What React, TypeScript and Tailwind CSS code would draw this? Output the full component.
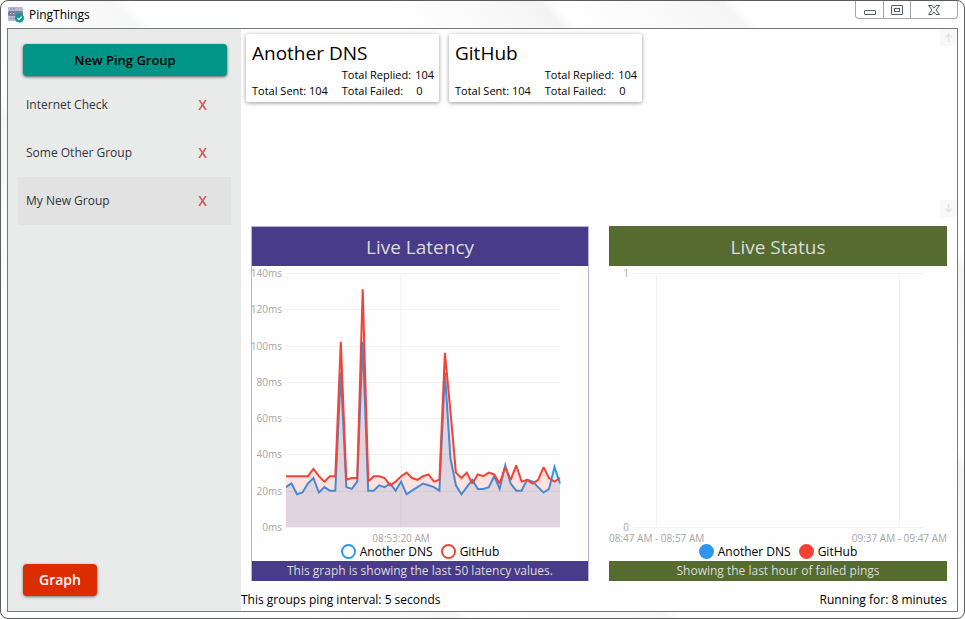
import React from "react";

const FONT = "font-['Open_Sans','Noto_Sans',sans-serif]";

const DNS = [
  22, 24, 18, 19, 24, 27, 19, 22, 20, 20, 85, 22, 21, 25, 102, 20, 20, 23, 22, 24, 20, 25, 18, 20, 22, 24,
  23, 22, 20, 85, 38, 23, 18, 22, 26, 21, 21, 22, 28, 21, 34, 24, 20, 20, 26, 25, 22, 19, 21, 33, 24,
];
const GITHUB = [
  28, 28, 28, 28, 28, 32, 28, 25, 28, 28, 102, 26, 27, 27, 131, 25, 28, 28, 27, 23, 25, 28, 30, 27, 26, 28,
  29, 25, 26, 96, 64, 30, 27, 30, 24, 29, 28, 30, 29, 24, 33, 26, 34, 25, 26, 24, 26, 33, 27, 25, 27,
];

const LEFT = 34;
const RIGHT = 308;
const TOP = 7;
const BOTTOM = 261;

function toPoints(values: number[]) {
  return values
    .map((v, i) => {
      const x = LEFT + (i * (RIGHT - LEFT)) / (values.length - 1);
      const y = BOTTOM - (v * (BOTTOM - TOP)) / 140;
      return `${x.toFixed(1)},${y.toFixed(1)}`;
    })
    .join(" ");
}

function AppIcon() {
  return (
    <svg className="size-4" viewBox="0 0 16 16" aria-hidden="true">
      <rect x="0" y="0" width="15" height="4" rx="1" fill="#b4bccd" />
      <rect x="0" y="4" width="15" height="5" rx="1" fill="#7a7fa6" />
      <rect x="0" y="9" width="12" height="5" rx="1" fill="#b4bccd" />
      <path d="M2 2h2M5 2h2M2 11.500h2M5 11.500h2" stroke="#8489ab" strokeWidth="1" />
      <path d="M2 6.500h1M5 6.500h1" stroke="#fff" strokeWidth="1" />
      <circle cx="11.500" cy="11" r="4.500" fill="#0b9a90" />
      <path d="M9.300 11l1.600 1.600 2.800-3" fill="none" stroke="#fff" strokeWidth="1.300" />
    </svg>
  );
}

function TitleBar() {
  return (
    <header className="flex h-[27px] items-start justify-between pl-[7px]">
      <div className="flex h-[27px] items-center gap-[5px]">
        <AppIcon />
        <h1 className="text-xs text-black">PingThings</h1>
      </div>
      <div className="mr-[6px] flex h-[18px] rounded-b border border-t-0 border-[#a3a6a8] bg-white">
        <button aria-label="Minimize" className="flex w-7 items-center justify-center border-r border-[#a3a6a8]">
          <svg className="h-4 w-4" viewBox="0 0 16 16">
            <rect x="2.500" y="8.500" width="11" height="4" rx="0.500" fill="#f4f4f4" stroke="#555f66" />
          </svg>
        </button>
        <button aria-label="Maximize" className="flex w-[27px] items-center justify-center border-r border-[#a3a6a8]">
          <svg className="h-4 w-4" viewBox="0 0 16 16">
            <rect x="2.500" y="3.500" width="11" height="9" rx="0.500" fill="#f4f4f4" stroke="#555f66" />
            <rect x="5.500" y="6.500" width="5" height="3" fill="#fff" stroke="#555f66" />
          </svg>
        </button>
        <button aria-label="Close" className="flex w-[46px] items-center justify-center">
          <svg className="h-4 w-4" viewBox="0 0 16 16">
            <path
              d="M2.500 3.500h3.500l2 2.500 2-2.500h3.500l-3.500 4.500 3.500 4.500H10L8 10l-2 2.500H2.500L6 8z"
              fill="#f4f4f4"
              stroke="#555f66"
            />
          </svg>
        </button>
      </div>
    </header>
  );
}

function Sidebar() {
  const groups = ["Internet Check", "Some Other Group", "My New Group"];
  return (
    <aside className="flex w-[233px] shrink-0 flex-col bg-[#e9ebea] px-[10px] py-[15px]">
      <button className="mr-1 ml-[5px] h-8 rounded-sm bg-[#009587] pt-px text-[13px] font-semibold text-black shadow-[0_1px_3px_#555]">
        New Ping Group
      </button>
      <ul className="mt-[5px]">
        {groups.map((name) => (
          <li
            key={name}
            className={`flex h-12 items-center justify-between pr-6 pl-2 text-xs text-[#2f3640] ${
              name === "My New Group" ? "bg-[#e2e2e2]" : ""
            }`}
          >
            <span>{name}</span>
            <button aria-label={`Remove ${name}`} className="text-sm font-semibold text-[#d65558]">
              X
            </button>
          </li>
        ))}
      </ul>
      <button className="mt-auto ml-[5px] h-8 w-[74px] rounded-sm bg-[#dd2c00] text-sm font-semibold text-white shadow-[0_1px_3px_#777]">
        Graph
      </button>
    </aside>
  );
}

function HostCard({ name }: { name: string }) {
  return (
    <article className="h-[68px] w-[193px] rounded-xs bg-white px-[6px] pt-[5px] text-[11px] leading-4 text-black shadow-[0_1px_4px_#999]">
      <h2 className="text-[19px] leading-7">{name}</h2>
      <div className="flex items-end justify-between whitespace-nowrap">
        <span>Total Sent: 104</span>
        <dl className="-mr-px grid grid-cols-[auto_auto] gap-x-1">
          <dt>Total Replied:</dt>
          <dd>104</dd>
          <dt>Total Failed:</dt>
          <dd className="pl-px">0</dd>
        </dl>
      </div>
    </article>
  );
}

function Arrow({ down }: { down?: boolean }) {
  return (
    <button
      aria-label={down ? "Scroll down" : "Scroll up"}
      className="flex size-[17px] items-center justify-center bg-[#f8f8f8]"
    >
      <svg className="size-[9px]" viewBox="0 0 9 9" fill="none" stroke="#e4e4e4" strokeWidth="1.500">
        <path d={down ? "M4.500 0v8M1 4.500l3.500 3.500 3.500-3.500" : "M4.500 9V1M1 4.500L4.500 1 8 4.500"} />
      </svg>
    </button>
  );
}

function Legend({ filled }: { filled?: boolean }) {
  return (
    <div className="flex h-[18px] items-center justify-center gap-2 pb-px text-xs leading-[15px] text-black">
      <span className="flex items-center gap-1">
        <i className={`size-[15px] rounded-full border-2 border-[#2d96ee] ${filled ? "bg-[#2d96ee]" : ""}`} />
        Another DNS
      </span>
      <span className="flex items-center gap-1">
        <i className={`size-[15px] rounded-full border-2 border-[#f44336] ${filled ? "bg-[#f44336]" : ""}`} />
        GitHub
      </span>
    </div>
  );
}

function LatencyChart() {
  const dns = toPoints(DNS);
  const github = toPoints(GITHUB);
  const ticks = [0, 20, 40, 60, 80, 100, 120, 140];
  return (
    <svg
      className="block w-full overflow-visible text-[10px]"
      viewBox="0 0 336 277"
      role="img"
      aria-label="Latency over time"
    >
      <g stroke="#f1f1f1" strokeWidth="1">
        {ticks.map((t) => {
          const y = Math.round(BOTTOM - (t * (BOTTOM - TOP)) / 140) + 0.5;
          return <line key={t} x1={LEFT} x2={RIGHT} y1={y} y2={y} />;
        })}
        <line x1="149" x2="149" y1={TOP} y2={BOTTOM} />
      </g>
      <g fill="#a6a6a6">
        {ticks.map((t) => (
          <text key={t} x="30" y={Math.round(BOTTOM - (t * (BOTTOM - TOP)) / 140) + 4} textAnchor="end">
            {t}ms
          </text>
        ))}
        <text x="149" y="276" textAnchor="middle">
          08:53:20 AM
        </text>
      </g>
      <polygon points={`${LEFT},${BOTTOM} ${dns} ${RIGHT},${BOTTOM}`} fill="#2196f3" fillOpacity="0.15" />
      <polyline points={dns} fill="none" stroke="#2d96ee" strokeWidth="2" />
      <polygon points={`${LEFT},${BOTTOM} ${github} ${RIGHT},${BOTTOM}`} fill="#f44336" fillOpacity="0.15" />
      <polyline points={github} fill="none" stroke="#f44336" strokeWidth="2" strokeMiterlimit="2" />
    </svg>
  );
}

function StatusChart() {
  return (
    <svg
      className="block w-full overflow-visible text-[10px]"
      viewBox="0 0 338 277"
      role="img"
      aria-label="Failed pings"
    >
      <path d="M24 7.500h291M24 261.500h291M47.500 7v254M290.500 7v254" stroke="#f3f3f3" fill="none" />
      <g fill="#a6a6a6">
        <text x="20" y="11" textAnchor="end">
          1
        </text>
        <text x="20" y="265" textAnchor="end">
          0
        </text>
        <text x="0" y="276">
          08:47 AM - 08:57 AM
        </text>
        <text x="338" y="276" textAnchor="end">
          09:37 AM - 09:47 AM
        </text>
      </g>
    </svg>
  );
}

export default function App() {
  return (
    <div
      className={`${FONT} flex min-h-screen flex-col rounded-lg border border-[#5c5c5c] bg-[linear-gradient(48deg,#fff_0%,#fff_18%,#f6f6f6_30%,#fff_31%,#f7f7f7_44%,#fff_45%,#fff_62%,#f4f4f4_72%,#fff_73%,#f5f5f5_84%,#fff_85%)] px-[6px] pb-[6px]`}
    >
      <div className="-mx-[6px]">
        <TitleBar />
      </div>
      <div className="flex flex-1 border border-[#77787a] bg-[#fefefe]">
        <Sidebar />
        <main className="flex min-w-0 flex-1 flex-col">
          <section className="flex h-[188px] justify-between">
            <div className="flex gap-[10px] pt-[5px] pl-[5px]">
              <HostCard name="Another DNS" />
              <HostCard name="GitHub" />
            </div>
            <div className="flex flex-col justify-between">
              <Arrow />
              <Arrow down />
            </div>
          </section>
          <section className="mt-[9px] grid grid-cols-2 gap-5 px-[10px]">
            <article className="border border-b-0 border-[#b6b1d6]">
              <h2 className="bg-[#483b8a] pt-px text-center text-[19px] leading-[38px] text-[#dcdcdc]">Live Latency</h2>
              <LatencyChart />
              <Legend />
              <p className="bg-[#483b8a] text-center text-xs leading-5 text-[#dcdcdc]">
                This graph is showing the last 50 latency values.
              </p>
            </article>
            <article>
              <h2 className="bg-[#556b2f] pt-0.5 text-center text-[19px] leading-[38px] text-[#dcdcdc]">Live Status</h2>
              <StatusChart />
              <Legend filled />
              <p className="bg-[#556b2f] text-center text-xs leading-5 text-[#dcdcdc]">
                Showing the last hour of failed pings
              </p>
            </article>
          </section>
          <footer className="mt-auto flex justify-between pr-[10px] pb-[3px] text-xs leading-4 text-black">
            <span>This groups ping interval: 5 seconds</span>
            <span>Running for: 8 minutes</span>
          </footer>
        </main>
      </div>
    </div>
  );
}
